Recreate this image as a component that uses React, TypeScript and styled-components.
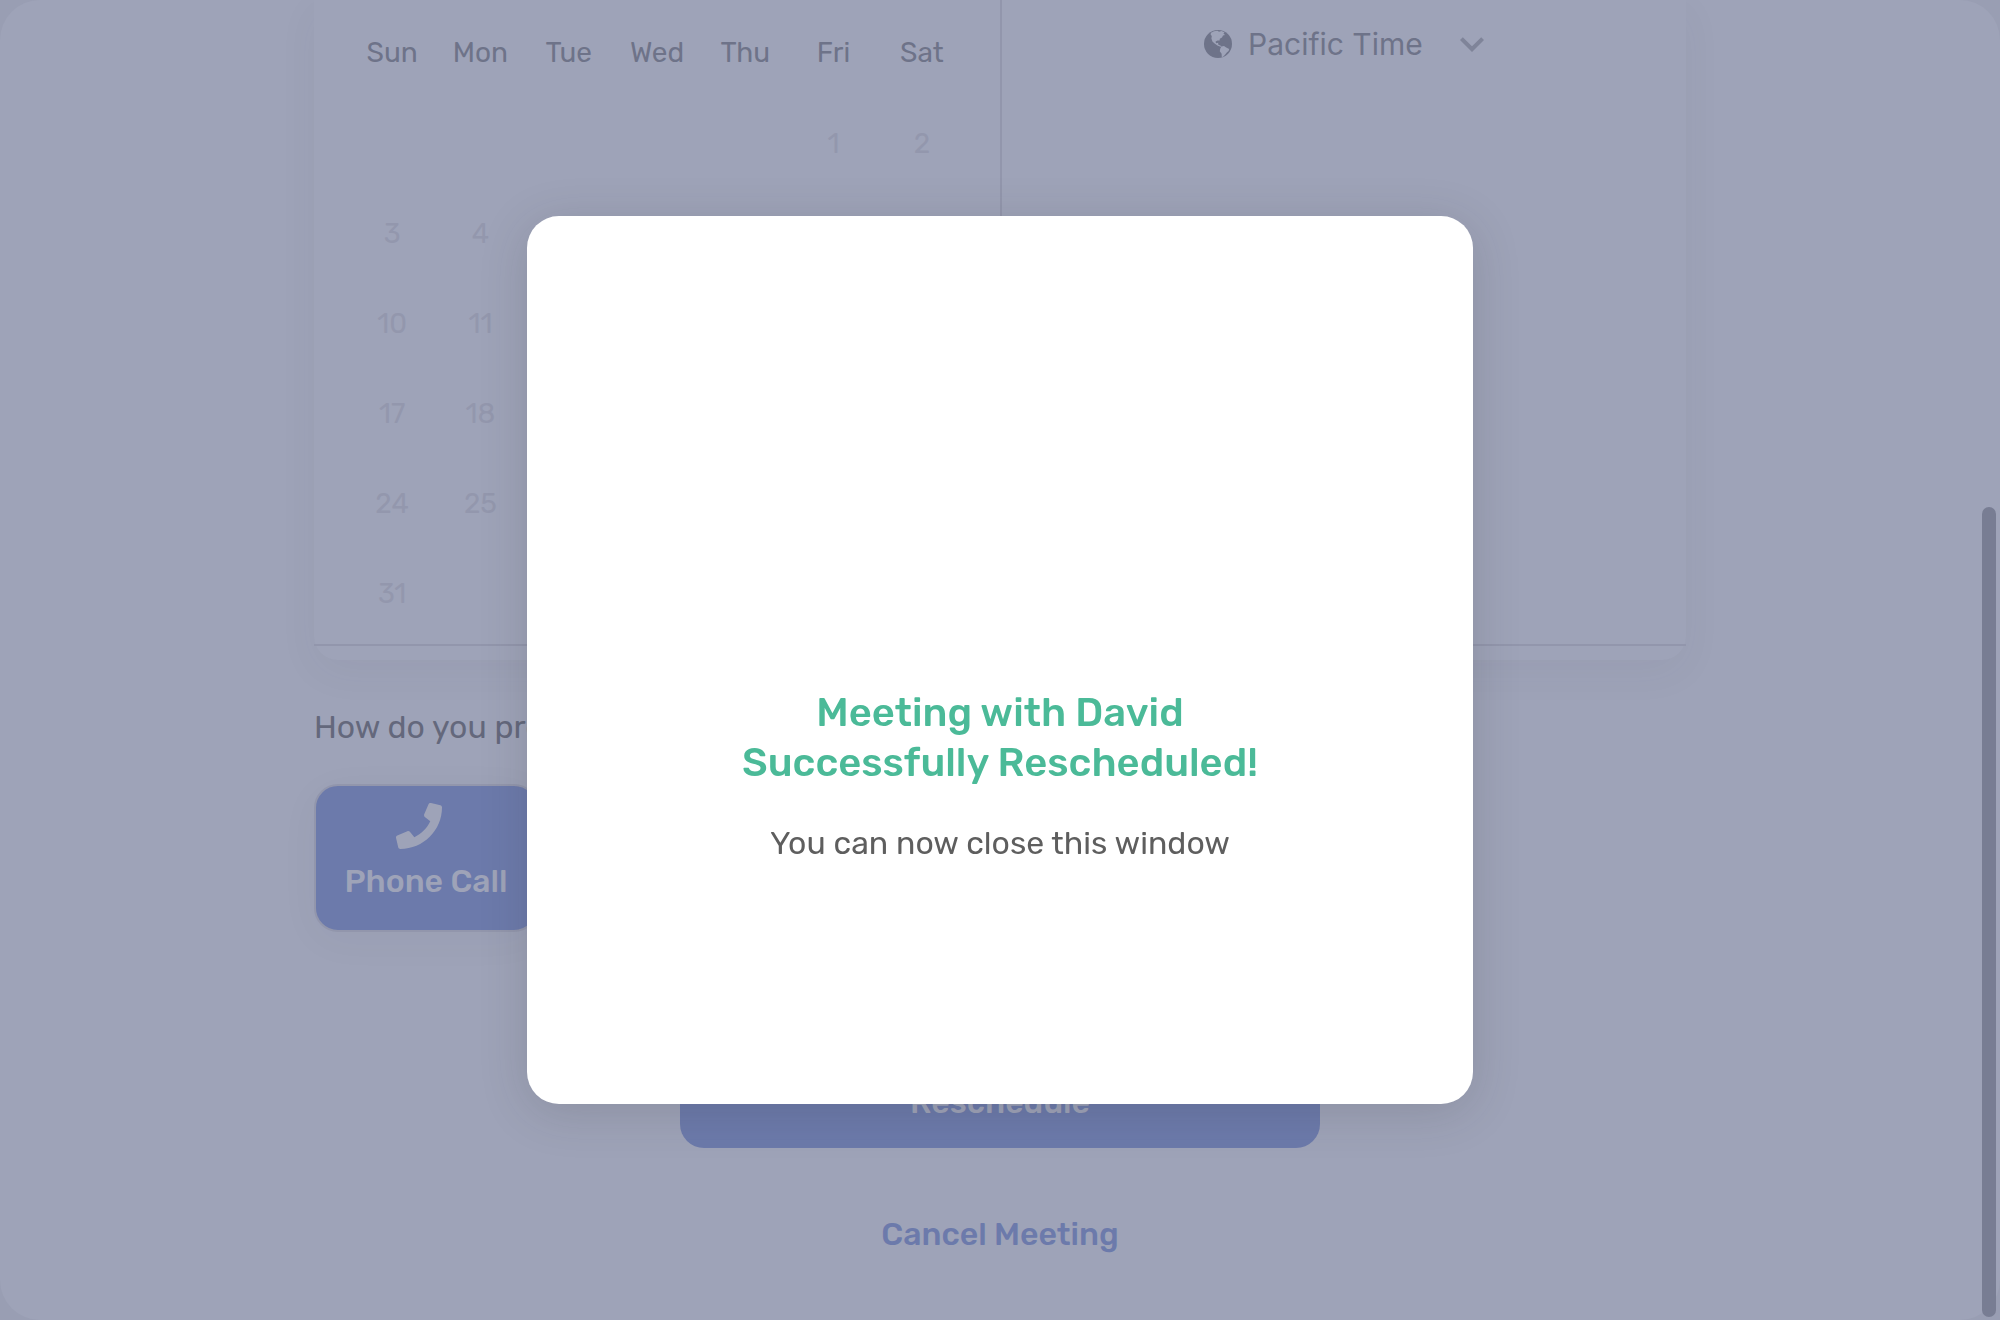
import React from "react";
import styled, { createGlobalStyle } from "styled-components";
import { FaPhone } from "react-icons/fa";
import { MdExpandMore } from "react-icons/md";

const color = {
  frame: "#999eb3",
  page: "#9ea3b8",
  line: "#9296ac",
  text: "#6e7389",
  question: "#64687c",
  faded: "#9397ad",
  primary: "#6c7aab",
  success: "#4bba98",
  body: "#5e5e5e",
};

const GlobalStyle = createGlobalStyle`
  * { box-sizing: border-box; }
  body {
    margin: 0;
    background: ${color.frame};
    font-family: Rubik, Roboto, "Liberation Sans", sans-serif;
    font-size: 32px;
    line-height: 40px;
    color: ${color.text};
  }
  button, select { font: inherit; color: inherit; }
`;

const Page = styled.main`
  height: 100vh;
  overflow: hidden;
  border-radius: 40px;
  background: ${color.page};
`;

const Content = styled.div`
  width: 70%;
  max-width: 1372px;
  margin: 0 auto;
  display: flex;
  flex-direction: column;
`;

const Card = styled.section`
  padding-bottom: 14px;
  border-radius: 0 0 24px 24px;
  box-shadow: 0 12px 40px rgba(50, 50, 70, 0.05);
`;

const Panes = styled.div`
  display: grid;
  grid-template-columns: 1fr 1fr;
  border-bottom: 2px solid ${color.line};
`;

const CalendarPane = styled.div`
  padding: 8px 34px 5px;
`;

const Calendar = styled.table`
  width: 100%;
  table-layout: fixed;
  border-collapse: collapse;
  font-size: 28px;

  th, td {
    height: 90px;
    padding: 0;
    text-align: center;
    vertical-align: middle;
  }
  th {
    height: 91px;
    padding-bottom: 1px;
    font-weight: 400;
  }
`;

const Day = styled.button`
  width: 64px;
  height: 64px;
  padding: 0;
  border: 0;
  border-radius: 50%;
  background: none;

  &:disabled { color: ${color.faded}; }
`;

const TimesPane = styled.div`
  display: flex;
  justify-content: center;
  align-items: flex-start;
  padding-top: 20px;
  border-left: 2px solid ${color.line};
`;

const ZoneField = styled.label`
  display: flex;
  align-items: center;
  height: 48px;

  svg { flex: none; }
`;

const ZoneSelect = styled.select`
  width: 200px;
  margin-left: 16px;
  padding: 0;
  border: 0;
  appearance: none;
  background: none;
  font-family: Inter, Roboto, sans-serif;
  font-size: 30px;
`;

const Chevron = styled(MdExpandMore)`
  margin-right: -12px;
  color: #7f8499;
`;

const Question = styled.h2`
  margin: 47px 0 37px;
  font-size: 32px;
  font-weight: 400;
  color: ${color.question};
`;

const Methods = styled.div`
  display: flex;
  gap: 24px;
`;

const Method = styled.button`
  display: flex;
  flex-direction: column;
  align-items: center;
  gap: 12px;
  width: 224px;
  height: 148px;
  padding: 17px 0 15px;
  border: 2px solid ${color.line};
  border-radius: 24px;
  background: ${color.primary};
  box-shadow: 0 8px 40px rgba(50, 50, 70, 0.04);
  color: ${color.page};
  font-weight: 500;

  svg { margin-right: 14px; }
`;

const Actions = styled.div`
  display: flex;
  flex-direction: column;
  align-items: center;
  gap: 60px;
  margin-top: 124px;
`;

const Primary = styled.button`
  width: 640px;
  height: 92px;
  border: 0;
  border-radius: 24px;
  background: ${color.primary};
  color: ${color.page};
  font-weight: 500;
`;

const CancelLink = styled.a`
  padding: 6px 0;
  color: ${color.primary};
  font-weight: 500;
  text-decoration: none;
`;

const Overlay = styled.div`
  position: fixed;
  inset: 0;
  display: flex;
  align-items: center;
  justify-content: center;
`;

const Dialog = styled.div`
  display: flex;
  flex-direction: column;
  align-items: center;
  justify-content: flex-end;
  gap: 35px;
  width: 946px;
  height: 888px;
  padding: 0 200px 241px;
  border-radius: 32px;
  background: #fff;
  box-shadow: 0 8px 48px rgba(50, 50, 50, 0.17);
  text-align: center;
`;

const DialogTitle = styled.h1`
  margin: 0;
  font-size: 40px;
  line-height: 50px;
  font-weight: 500;
  color: ${color.success};
`;

const DialogText = styled.p`
  margin: 0;
  color: ${color.body};
`;

const ScrollThumb = styled.div`
  position: fixed;
  top: 507px;
  right: 4px;
  bottom: 3px;
  width: 14px;
  border-radius: 7px;
  background: #787d93;
`;

const Globe = () => (
  <svg width="28" height="28" viewBox="0 0 28 28" aria-hidden>
    <circle cx="14" cy="14" r="14" fill="currentColor" />
    <g fill={color.page}>
      <path d="M7 2.8 L10 1.2 L13.5 .7 L15 1.7 L17.5 1 L20.5 2.2 L19.5 3.6 L21 5 L19 5.4 L18 7.6 L15.8 8.8 L15.6 10.6 L13.6 10.4 L11.6 11.4 L12 13.2 L14.2 12.8 L14.2 14.4 L16.2 15.4 L17.8 16.2 L16.4 16.8 L13.4 15.6 L10.6 13.6 L8.4 11.4 L7.4 8.4 L7.8 6 L6.6 4.6 Z" />
      <path d="M17.4 16.4 L20 16 L22.2 17.6 L25.2 19 L24.6 21 L22.8 22.6 L21 24.8 L19.4 26.6 L17.8 27.2 L17.6 23.8 L15.8 21.2 L16.2 18.8 Z" />
    </g>
  </svg>
);

const weekdays = ["Sun", "Mon", "Tue", "Wed", "Thu", "Fri", "Sat"];
const firstWeekday = 5;
const daysInMonth = 31;

const weeks = Array.from({ length: 6 }, (_, week) =>
  weekdays.map((_, weekday) => {
    const day = week * 7 + weekday - firstWeekday + 1;
    return day >= 1 && day <= daysInMonth ? day : null;
  })
);

export default function App() {
  return (
    <>
      <GlobalStyle />
      <Page>
        <Content>
          <Card>
            <Panes>
              <CalendarPane>
                <Calendar>
                  <thead>
                    <tr>
                      {weekdays.map((name) => (
                        <th key={name} scope="col">{name}</th>
                      ))}
                    </tr>
                  </thead>
                  <tbody>
                    {weeks.map((week, row) => (
                      <tr key={row}>
                        {week.map((day, column) => (
                          <td key={column}>
                            {day && <Day type="button" disabled>{day}</Day>}
                          </td>
                        ))}
                      </tr>
                    ))}
                  </tbody>
                </Calendar>
              </CalendarPane>
              <TimesPane>
                <ZoneField>
                  <Globe />
                  <ZoneSelect aria-label="Time zone" defaultValue="pacific">
                    <option value="pacific">Pacific Time</option>
                  </ZoneSelect>
                  <Chevron size={48} aria-hidden />
                </ZoneField>
              </TimesPane>
            </Panes>
          </Card>
          <Question>How do you prefer to meet?</Question>
          <Methods>
            <Method type="button">
              <FaPhone size={46} aria-hidden />
              Phone Call
            </Method>
          </Methods>
          <Actions>
            <Primary type="button">Reschedule</Primary>
            <CancelLink href="#cancel">Cancel Meeting</CancelLink>
          </Actions>
        </Content>
      </Page>
      <ScrollThumb aria-hidden />
      <Overlay>
        <Dialog role="dialog" aria-modal="true" aria-labelledby="dialog-title">
          <DialogTitle id="dialog-title">
            Meeting with David
            <br />
            Successfully Rescheduled!
          </DialogTitle>
          <DialogText>You can now close this window</DialogText>
        </Dialog>
      </Overlay>
    </>
  );
}
